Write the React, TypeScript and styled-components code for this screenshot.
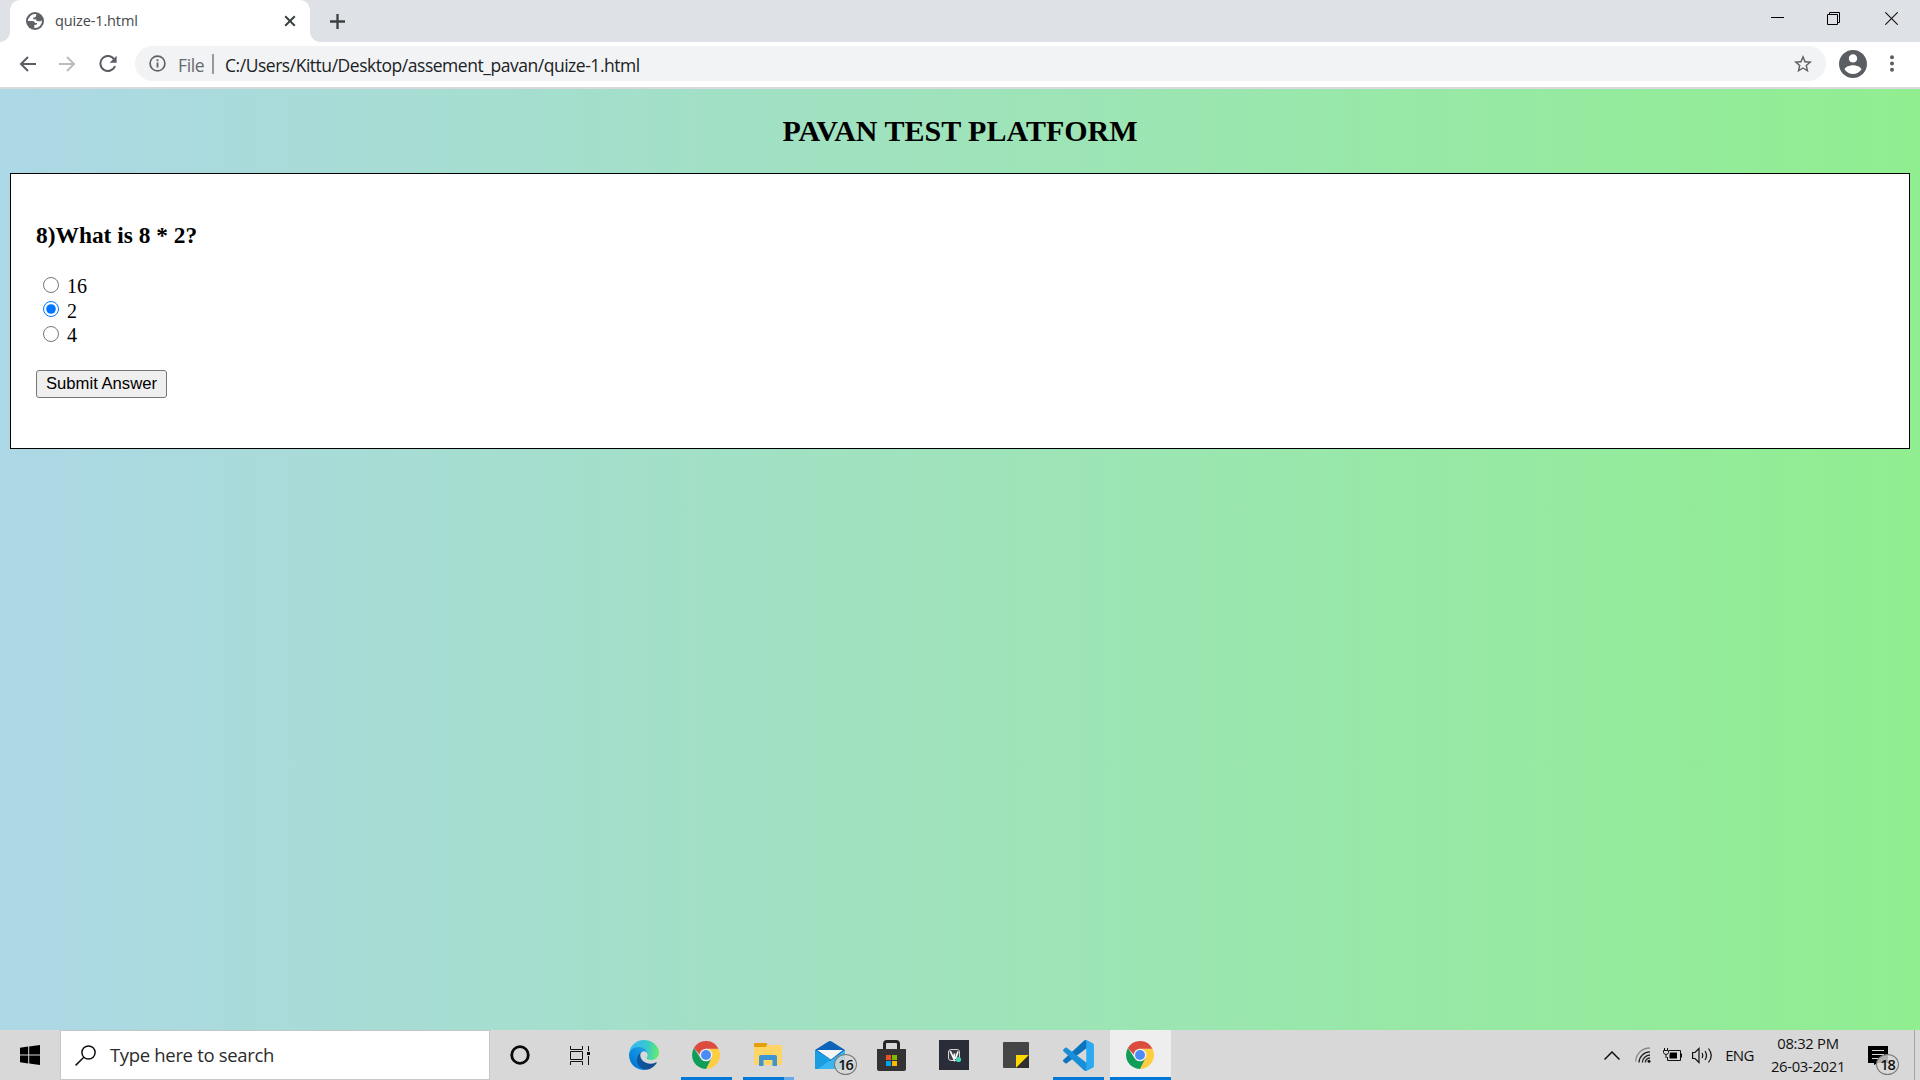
import React, { useState } from "react";
import styled, { createGlobalStyle, css } from "styled-components";

const UI_FONT = `"Open Sans", "Noto Sans", sans-serif`;

const GlobalStyle = createGlobalStyle`
  * { box-sizing: border-box; }
  html, body { margin: 0; padding: 0; }
  body { overflow: hidden; }
`;

const Screen = styled.div`
  width: 1920px;
  height: 1080px;
  display: flex;
  flex-direction: column;
  overflow: hidden;
`;

const Icon = styled.svg<{ $shift?: number }>`
  display: block;
  flex: none;
  margin-left: ${(p) => p.$shift ?? 0}px;
`;

/* ---------- Browser chrome ---------- */

const TabStrip = styled.header`
  height: 42px;
  flex: none;
  display: flex;
  background: #dee1e6;
`;

const TabCurve = styled.div<{ $side: "left" | "right" }>`
  width: 10px;
  height: 42px;
  flex: none;
  background: radial-gradient(
    circle at ${(p) => (p.$side === "left" ? "0 32px" : "10px 32px")},
    transparent 9.5px,
    #fff 10px
  );
  clip-path: inset(32px 0 0 0);
`;

const Tab = styled.div`
  width: 300px;
  height: 42px;
  flex: none;
  display: flex;
  align-items: center;
  padding: 0 13px 0 16px;
  border-radius: 10px 10px 0 0;
  background: #fff;
`;

const TabTitle = styled.span`
  flex: 1;
  margin-left: 11px;
  font: 14.5px/20px ${UI_FONT};
  letter-spacing: -0.13px;
  color: #45484d;
`;

const NewTab = styled.div`
  width: 35px;
  display: grid;
  place-items: center;
`;

const WindowControls = styled.div`
  margin-left: auto;
  display: flex;
  height: 36px;
`;

const WindowControl = styled.div`
  width: 57px;
  display: grid;
  place-items: center;
`;

const Toolbar = styled.div`
  height: 47px;
  flex: none;
  display: flex;
  align-items: center;
  padding: 0 13px 2px 7px;
  background: #fff;
  border-bottom: 2px solid #d8dadd;
`;

const NavButton = styled.div`
  width: 40px;
  height: 40px;
  flex: none;
  display: grid;
  place-items: center;
`;

const AddressBar = styled.div`
  flex: 1;
  height: 35px;
  margin-left: 8px;
  margin-right: 13px;
  display: flex;
  align-items: center;
  padding: 0 14px;
  border-radius: 18px;
  background: #f1f3f4;
  font: 17.5px/24px ${UI_FONT};
`;

const Scheme = styled.span`
  width: 34px;
  margin-left: 12px;
  padding-top: 2px;
  letter-spacing: -0.4px;
  color: #66696e;
`;

const Divider = styled.span`
  width: 2px;
  height: 20px;
  background: #96999d;
`;

const Url = styled.span`
  flex: 1;
  margin-left: 11px;
  padding-top: 2px;
  letter-spacing: -0.47px;
  color: #202124;
`;

/* ---------- Quiz page ---------- */

const Page = styled.main`
  flex: 1;
  padding: 0 10px;
  background: linear-gradient(to right, lightblue, lightgreen);
  font-family: "Liberation Serif", "Times New Roman", serif;
`;

const Title = styled.h2`
  margin: 0;
  padding: 24px 0 25px;
  font-size: 30px;
  line-height: 35px;
  text-align: center;
  color: #000;
`;

const Quiz = styled.section`
  height: 276px;
  padding: 48px 25px 0;
  border: 1px solid #000;
  background: #fff;
`;

const Question = styled.h3`
  margin: 0 0 24px;
  font-size: 23.4px;
  line-height: 27px;
`;

const Option = styled.label`
  height: 24.5px;
  display: flex;
  align-items: flex-start;
  font-size: 20px;
  line-height: 23px;
`;

const OptionText = styled.span`
  padding-top: 2px;
`;

const Radio = styled.input`
  width: 16px;
  height: 16px;
  margin: 3.9px 8px 0 7px;
`;

const Submit = styled.button`
  display: block;
  width: 131px;
  height: 28px;
  margin-top: 23px;
  padding: 0;
  border: 1px solid #767676;
  border-radius: 3px;
  background: #efefef;
  font: 16.67px/20px "Liberation Sans", Arial, sans-serif;
  color: #000;
`;

/* ---------- Taskbar ---------- */

const Taskbar = styled.footer`
  height: 50px;
  flex: none;
  display: flex;
  background: #d8d8d8;
  font-family: ${UI_FONT};
  color: #111;
`;

const Start = styled.div`
  width: 60px;
  display: grid;
  place-items: center;
`;

const Search = styled.div`
  width: 430px;
  margin-right: -1px;
  display: flex;
  align-items: center;
  padding-left: 14px;
  border: 1px solid #c6c6c6;
  background: #fff;
  font-size: 18.5px;
  letter-spacing: -0.33px;
  color: #2b2b2b;
`;

const SearchHint = styled.span`
  margin-left: 14px;
  padding-bottom: 2px;
`;

const TaskButton = styled.div<{ $running?: boolean; $active?: boolean; $stacked?: boolean }>`
  width: 62px;
  height: 50px;
  flex: none;
  display: grid;
  place-items: center;
  background-color: ${(p) => (p.$active ? "#eeeeee" : "transparent")};
  background-repeat: no-repeat;
  ${(p) =>
    p.$running &&
    css`
      background-image: linear-gradient(#0078d7, #0078d7);
      background-size: ${p.$active ? "62px" : "51px"} 3px;
      background-position: ${p.$active ? "0" : "6px"} 47px;
    `}
  ${(p) =>
    p.$stacked &&
    css`
      background-image: linear-gradient(to right, #0078d7 41px, #66aae8 41px);
    `}
  ${(p) =>
    p.$active &&
    css`
      width: 61px;
      margin-left: 1px;
      padding-right: 2px;
    `}
`;

const BadgeAnchor = styled.div`
  position: relative;
`;

const Badge = styled.span<{ $x: number; $y: number }>`
  position: absolute;
  left: ${(p) => p.$x}px;
  top: ${(p) => p.$y}px;
  width: 23px;
  height: 21px;
  display: grid;
  place-items: center;
  border: 1px solid #777;
  border-radius: 50%;
  background: rgba(216, 216, 216, 0.82);
  font-size: 14.5px;
  font-weight: 600;
  line-height: 18px;
  letter-spacing: -1px;
`;

const Tray = styled.div`
  margin-left: auto;
  display: flex;
  align-items: center;
`;

const TrayCell = styled.div<{ $w: number }>`
  width: ${(p) => p.$w}px;
  flex: none;
  display: flex;
  justify-content: center;
  font-size: 15px;
  letter-spacing: -0.6px;
`;

const Clock = styled.div`
  width: 92px;
  display: flex;
  flex-direction: column;
  align-items: center;
  font-size: 14.8px;
  line-height: 23px;
  letter-spacing: -0.3px;
`;

const ShowDesktop = styled.div`
  width: 6px;
  height: 50px;
  border-left: 1px solid #a5a5a5;
`;

const GlobeIcon = () => (
  <Icon width="18" height="18" viewBox="0 0 18 18">
    <circle cx="9" cy="9" r="9" fill="#5f6368" />
    <path d="M10.300 2.100A7 7 0 0 0 4.200 4L3.600 5.300 2.300 6.800A7 7 0 0 0 2 9H6.500Q8.800 9.200 9 11H11L10.800 12.500 8.300 12.900V15.950A7 7 0 0 0 15.950 8.200L14.500 9.200H11.800Q10.200 9 10 7.200H7.200V5.400H9Q10.500 5 10.300 2.100z" fill="#fff" />
  </Icon>
);

const ChromeLogo = () => (
  <Icon width="28" height="28" viewBox="0 0 28 28">
    <path d="M14 7.700H26.500A14 14 0 0 1 14 28L19.500 17z" fill="#ffcd40" />
    <path d="M1.900 7 8.500 17.100 14 20.300 19.500 17.100 14 28A14 14 0 0 1 1.900 7z" fill="#109d58" />
    <path d="M1.900 7A14 14 0 0 1 26.500 7.700H14L8 14z" fill="#db4b3e" />
    <circle cx="14" cy="14" r="6.300" fill="#f1f1f1" />
    <circle cx="14" cy="14" r="5" fill="#4c8bf5" />
  </Icon>
);

const EdgeLogo = () => (
  <Icon width="30" height="30" viewBox="0 0 256 256">
    <defs>
      <linearGradient id="edgeDeep" x1="60" y1="177" x2="240" y2="177" gradientUnits="userSpaceOnUse">
        <stop offset="0" stopColor="#0c59a4" />
        <stop offset="1" stopColor="#114a8b" />
      </linearGradient>
      <linearGradient id="edgeMid" x1="150" y1="100" x2="40" y2="230" gradientUnits="userSpaceOnUse">
        <stop offset="0" stopColor="#1b9de2" />
        <stop offset="1" stopColor="#0078d7" />
      </linearGradient>
      <linearGradient id="edgeTop" x1="10" y1="70" x2="250" y2="110" gradientUnits="userSpaceOnUse">
        <stop offset="0" stopColor="#35b8f1" />
        <stop offset=".55" stopColor="#36c7d0" />
        <stop offset="1" stopColor="#66eb6e" />
      </linearGradient>
    </defs>
    <path fill="url(#edgeDeep)" d="M231 190.500c-3.400 1.800-6.900 3.400-10.500 4.700a101.900 101.900 0 0 1-35.900 6.500c-47.300 0-88.500-32.500-88.500-74.300.1-11.400 6.400-21.900 16.400-27.300-42.800 1.800-53.800 46.400-53.800 72.500 0 73.900 68.100 81.400 82.800 81.400 7.900 0 19.800-2.300 27-4.600l1.300-.4a128.300 128.300 0 0 0 66.600-52.800 4 4 0 0 0-5.400-5.700z" />
    <path fill="url(#edgeMid)" d="M105.700 241.400a79.200 79.200 0 0 1-22.700-21.300 80.700 80.700 0 0 1 29.500-120c3.200-1.500 8.500-4.100 15.600-4a32.400 32.400 0 0 1 25.700 13 31.900 31.900 0 0 1 6.300 18.700c0-.2 24.500-79.600-80-79.600-43.900 0-80 41.700-80 78.200a130.200 130.200 0 0 0 12.100 56 128 128 0 0 0 156.400 67 75.600 75.600 0 0 1-62.800-8z" />
    <path fill="url(#edgeTop)" d="M152.300 148.900c-.9 1-3.400 2.500-3.400 5.600 0 2.600 1.700 5.200 4.800 7.300 14.300 10 41.400 8.600 41.500 8.600a59.600 59.600 0 0 0 30.300-8.300A61.400 61.400 0 0 0 256 109.200c.3-22.400-8-37.300-11.300-43.900C223.500 23.900 177.700 0 128 0A128 128 0 0 0 0 126.200c.5-36.500 36.800-66 80-66 3.500 0 23.500.3 42 10.100 16.300 8.600 24.900 19 30.800 29.200 6.200 10.700 7.300 24.100 7.300 29.500 0 5.300-2.700 13.300-7.800 19.900z" />
  </Icon>
);

const FolderLogo = () => (
  <Icon width="28" height="24" viewBox="0 0 28 24">
    <path d="M0 4H12L14 2H28V22H0z" fill="#ffd566" />
    <path d="M0 1Q0 0 1 0H12Q13.500 0 13 2L12 4H0z" fill="#e3a008" />
    <path d="M5 23V14Q5 12 7 12H21Q23 12 23 14V23H18.500V17H9.500V23z" fill="#3d94d2" />
  </Icon>
);

const MailLogo = () => (
  <Icon width="30" height="28" viewBox="0 0 30 28">
    <path d="M0 9 13 .7Q15 -.5 17 .7L30 9V28H0z" fill="#0b64b8" />
    <path d="M0 9 15 20 30 9V28H0z" fill="#38b6ef" />
    <path d="M0 9V28H3L16 18.500z" fill="#1b9de2" />
    <path d="M2 9H28L16 18.500z" fill="#f5f5f5" />
  </Icon>
);

const StoreLogo = () => (
  <Icon width="30" height="31" viewBox="0 0 30 31">
    <path d="M7.500 10V4Q7.500 1.500 10 1.500H19Q21.500 1.500 21.500 4V10" fill="none" stroke="#262626" strokeWidth="3" />
    <path d="M0 9H29V29Q29 31 27 31H2Q0 31 0 29z" fill="#333" />
    <path d="M9 15h5v5H9z" fill="#f25022" />
    <path d="M15 15h5v5h-5z" fill="#7fba00" />
    <path d="M9 21h5v5H9z" fill="#00a4ef" />
    <path d="M15 21h5v5h-5z" fill="#ffb900" />
  </Icon>
);

const SaavnLogo = () => (
  <Icon width="30" height="30" viewBox="0 0 30 30">
    <path d="M0 0h30v30H0z" fill="#2a2c38" />
    <rect x="9.500" y="9.500" width="11" height="11" rx="2.500" fill="#3c3d47" stroke="#d6d6d6" />
    <path d="M11.200 11 15 19 15.500 13.500M16.500 19 19 11.500" fill="none" stroke="#fff" strokeWidth="1.700" />
    <circle cx="19.500" cy="19.500" r="2.600" fill="#3cd5b8" />
  </Icon>
);

const NotesLogo = () => (
  <Icon width="26" height="26" viewBox="0 0 26 26">
    <rect width="26" height="26" rx="1" fill="#454545" />
    <path d="M13 13H26L13 26z" fill="#ffd800" />
    <path d="M26 13V26H13z" fill="#2f2f2f" />
  </Icon>
);

const CodeLogo = () => (
  <Icon width="31" height="31" viewBox="0 0 100 100">
    <path d="M96 11 75.500 1A6 6 0 0 0 68.400 2L1.400 63.500a4 4 0 0 0 0 6L7 74.600a4 4 0 0 0 5.200.2L93 13.500c2.700-2 6.600-.1 6.600 3.300z" fill="#0b74bd" />
    <path d="M96 89 75.500 99A6 6 0 0 1 68.400 98L1.400 36.500a4 4 0 0 1 0-6L7 25.400a4 4 0 0 1 5.200-.2L93 86.500c2.700 2 6.600.1 6.600-3.300z" fill="#188fd6" />
    <path d="M75.600 99A6 6 0 0 1 68.400 98C70.700 100 75 98.400 75 94.700V5.300C75 1.600 70.700 0 68.400 2A6 6 0 0 1 75.600 1L96 11A6 6 0 0 1 99.700 16.300V83.700A6 6 0 0 1 96 89z" fill="#2ba9f1" />
  </Icon>
);

const OPTIONS = ["16", "2", "4"];

export default function App() {
  const [answer, setAnswer] = useState("2");

  return (
    <Screen>
      <GlobalStyle />
      <TabStrip>
        <TabCurve $side="left" />
        <Tab>
          <GlobeIcon />
          <TabTitle>quize-1.html</TabTitle>
          <Icon width="14" height="14" viewBox="0 0 14 14" stroke="#3c4043" strokeWidth="2">
            <path d="M2.200 2.200 11.800 11.800M11.800 2.200 2.200 11.800" />
          </Icon>
        </Tab>
        <TabCurve $side="right" />
        <NewTab>
          <Icon width="15" height="15" viewBox="0 0 15 15" stroke="#3c4043" strokeWidth="2.300">
            <path d="M7.500 0V15M0 7.500H15" />
          </Icon>
        </NewTab>
        <WindowControls>
          <WindowControl>
            <Icon width="13" height="13" $shift={-1}>
              <path d="M0 5.500H13" stroke="#000" />
            </Icon>
          </WindowControl>
          <WindowControl>
            <Icon width="13" height="13" $shift={-2} fill="none" stroke="#000">
              <path d="M.5 2.500H10.500V12.500H.5zM2.500 2.500V.5H12.500V10.500H10.500" />
            </Icon>
          </WindowControl>
          <WindowControl>
            <Icon width="13" height="13" $shift={-1} stroke="#111" strokeWidth="1.100">
              <path d="M.3.3 12.700 12.700M12.700.3.3 12.700" />
            </Icon>
          </WindowControl>
        </WindowControls>
      </TabStrip>

      <Toolbar>
        <NavButton>
          <Icon width="17" height="16" viewBox="0 0 17 16" fill="none" stroke="#5a5d62" strokeWidth="2">
            <path d="M17 8H2M9 1 2 8 9 15" />
          </Icon>
        </NavButton>
        <NavButton>
          <Icon width="17" height="16" viewBox="0 0 17 16" fill="none" stroke="#babcbe" strokeWidth="2">
            <path d="M0 8H15M8 1 15 8 8 15" />
          </Icon>
        </NavButton>
        <NavButton>
          <Icon width="18" height="18" viewBox="0 0 18 18" $shift={2}>
            <path d="M15.300 4.500A7.500 7.500 0 1 0 16 11" fill="none" stroke="#5a5d62" strokeWidth="2" />
            <path d="M17.600.8V7.800H10.600z" fill="#5a5d62" />
          </Icon>
        </NavButton>
        <AddressBar>
          <Icon width="17" height="17" viewBox="0 0 17 17">
            <circle cx="8.500" cy="8.500" r="7.400" fill="none" stroke="#5f6368" strokeWidth="1.700" />
            <path d="M7.600 7.600h1.800v5H7.600zM7.600 4.300h1.800v1.900H7.600z" fill="#5f6368" />
          </Icon>
          <Scheme>File</Scheme>
          <Divider />
          <Url>C:/Users/Kittu/Desktop/assement_pavan/quize-1.html</Url>
          <Icon width="18" height="18" viewBox="0 0 24 24" fill="#5f6368">
            <path d="M24 8.700 15.400 8 12 0 8.600 8 0 8.700 6.500 14.400 4.600 22.900 12 18.400 19.400 22.900 17.400 14.400zM12 16.200 7.500 18.900 8.700 13.800 4.700 10.300 10 9.900 12 5 14 9.900 19.300 10.300 15.300 13.800 16.500 18.900z" />
          </Icon>
        </AddressBar>
        <Icon width="28" height="28" viewBox="2 2 20 20" fill="#5a5d62">
          <path d="M12 2C6.480 2 2 6.480 2 12s4.480 10 10 10 10-4.480 10-10S17.520 2 12 2zm0 3c1.660 0 3 1.340 3 3s-1.340 3-3 3-3-1.340-3-3 1.340-3 3-3zm0 14.200c-2.500 0-4.710-1.280-6-3.220.03-1.990 4-3.080 6-3.080 1.990 0 5.970 1.090 6 3.080-1.290 1.940-3.500 3.220-6 3.220z" />
        </Icon>
        <NavButton>
          <Icon width="4" height="17" viewBox="0 0 4 17" fill="#5a5d62" $shift={10}>
            <circle cx="2" cy="2.200" r="2" />
            <circle cx="2" cy="8.500" r="2" />
            <circle cx="2" cy="14.800" r="2" />
          </Icon>
        </NavButton>
      </Toolbar>

      <Page>
        <Title>PAVAN TEST PLATFORM</Title>
        <Quiz>
          <Question>8)What is 8 * 2?</Question>
          {OPTIONS.map((value) => (
            <Option key={value}>
              <Radio
                type="radio"
                name="answer"
                value={value}
                checked={answer === value}
                onChange={() => setAnswer(value)}
              />
              <OptionText>{value}</OptionText>
            </Option>
          ))}
          <Submit>Submit Answer</Submit>
        </Quiz>
      </Page>

      <Taskbar>
        <Start>
          <Icon width="20" height="20" viewBox="0 0 20 20">
            <path d="M0 2.800 8.200 1.600V9.500H0zM9.200 1.500 20 0V9.500H9.200zM0 10.500H8.200V18.400L0 17.200zM9.200 10.500H20V20L9.200 18.500z" />
          </Icon>
        </Start>
        <Search>
          <Icon width="21" height="21" viewBox="0 0 21 21" fill="none" stroke="#111" strokeWidth="1.500">
            <circle cx="13.500" cy="7.500" r="6.600" />
            <path d="M8.800 12.200.6 20.400" />
          </Icon>
          <SearchHint>Type here to search</SearchHint>
        </Search>
        <TaskButton>
          <Icon width="20" height="20" viewBox="0 0 20 20">
            <circle cx="10" cy="10" r="8.300" fill="none" stroke="#0a0a0a" strokeWidth="2.800" />
          </Icon>
        </TaskButton>
        <TaskButton>
          <Icon width="20" height="19" viewBox="0 0 20 19" fill="none" stroke="#111" $shift={-4}>
            <path d="M.5 0V3.500H12.500V0M.5 5.500H12.500V13.500H.5zM.5 19V15.500H12.500V19M18.500 0V5M18.500 10V19" />
            <path d="M17 6h3v3h-3z" fill="#111" stroke="none" />
          </Icon>
        </TaskButton>
        <TaskButton><EdgeLogo /></TaskButton>
        <TaskButton $running><ChromeLogo /></TaskButton>
        <TaskButton $running $stacked><FolderLogo /></TaskButton>
        <TaskButton>
          <BadgeAnchor>
            <MailLogo />
            <Badge $x={19} $y={13}>16</Badge>
          </BadgeAnchor>
        </TaskButton>
        <TaskButton><StoreLogo /></TaskButton>
        <TaskButton><SaavnLogo /></TaskButton>
        <TaskButton><NotesLogo /></TaskButton>
        <TaskButton $running><CodeLogo /></TaskButton>
        <TaskButton $running $active><ChromeLogo /></TaskButton>

        <Tray>
          <TrayCell $w={32}>
            <Icon width="16" height="9" viewBox="0 0 16 9" fill="none" stroke="#111" strokeWidth="1.500">
              <path d="M.5 8.500 8 1 15.500 8.500" />
            </Icon>
          </TrayCell>
          <TrayCell $w={30}>
            <Icon width="16" height="16" viewBox="0 0 16 16" fill="none" stroke="#222" strokeWidth="1.300">
              <path d="M.7 14.500A14 14 0 0 1 15 1" stroke="#8a8a8a" />
              <path d="M4 15.500A11 11 0 0 1 15 4.800M7.300 15.500A8 8 0 0 1 15 8M10.300 15.500A5 5 0 0 1 15 11" />
              <circle cx="14" cy="14.300" r="1.500" fill="#111" stroke="none" />
            </Icon>
          </TrayCell>
          <TrayCell $w={29}>
            <Icon width="20" height="14" viewBox="0 0 20 14" fill="none" stroke="#111">
              <path d="M4.500 9V12.500H17.500V2.500H6M18.500 5.500V9.500" />
              <path d="M7 4.500H14V10.500H6.500V7z" fill="#000" stroke="none" />
              <path d="M1.500 0V2.500M4.500 0V2.500M.5 2.500H5.500V4.500Q5 6.500 3 6.500Q1 6.500 .5 4.500zM3 6.500V10" />
            </Icon>
          </TrayCell>
          <TrayCell $w={30}>
            <Icon width="21" height="17" viewBox="0 0 21 17" fill="none" stroke="#111" strokeWidth="1.200">
              <path d="M.6 5.500H3L7 1.500V15.500L3 11.500H.6z" />
              <path d="M10 6Q11.500 8.500 10 11M13 4Q16 8.500 13 13M16.500 1.500Q22 8.500 16.500 15.500" />
            </Icon>
          </TrayCell>
          <TrayCell $w={45}>ENG</TrayCell>
          <Clock>
            <span>08:32 PM</span>
            <span>26-03-2021</span>
          </Clock>
          <TrayCell $w={60}>
            <BadgeAnchor>
              <Icon width="20" height="20" viewBox="0 0 20 20" $shift={-12}>
                <path d="M0 1H20V18H10L6 20V18H0z" fill="#000" />
                <path d="M4 5.500H16M4 9.500H16M4 13.500H12" stroke="#d8d8d8" />
              </Icon>
              <Badge $x={-4} $y={9}>18</Badge>
            </BadgeAnchor>
          </TrayCell>
          <ShowDesktop />
        </Tray>
      </Taskbar>
    </Screen>
  );
}
